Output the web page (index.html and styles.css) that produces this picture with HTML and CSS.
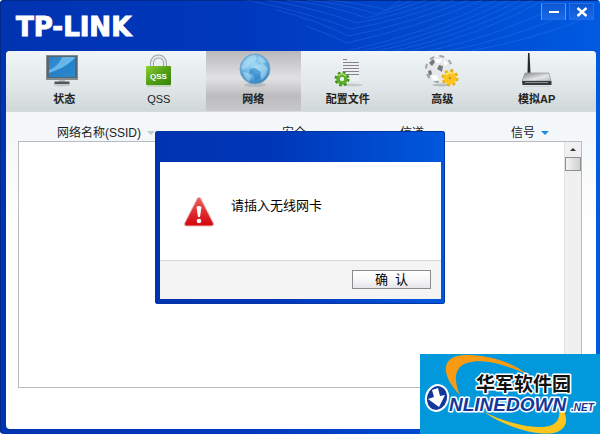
FILE: index.html
```html
<!DOCTYPE html>
<html lang="zh-CN">
<head>
    <meta charset="UTF-8">
    <meta name="viewport" content="width=device-width, initial-scale=1.0">
    <title>TP-LINK</title>
    <link rel="stylesheet" href="styles.css">
</head>
<body>
    <div class="window">
        <header class="titlebar">
            <svg class="waves" viewBox="0 0 400 51" preserveAspectRatio="xMaxYMin slice" aria-hidden="true">
                <g fill="none" stroke="#5b9cff" stroke-opacity=".3" stroke-width=".7">
                    <path d="M130 0Q165 3 190 10M110 0Q150 4 180 14M90 0Q140 6 170 18M70 0Q120 8 160 23M50 0Q110 12 155 29M80 10Q120 20 152 36M110 26Q130 33 150 43"/>
                    <path d="M150 51Q230 34 300 0M166 51Q245 34 312 0M182 51Q258 34 324 0M198 51Q272 34 336 0M214 51Q287 34 348 0M232 51Q302 36 366 4M252 51Q318 38 380 10M274 51Q335 40 390 18"/>
                    <path d="M150 43Q220 28 286 0M152 36Q212 24 272 0M155 29Q205 20 258 0M160 23Q200 16 244 0M170 18Q195 12 230 0M180 14Q195 9 216 0M190 10Q198 6 204 0"/>
                </g>
            </svg>
            <h1 class="logo">TP-LINK</h1>
            <div class="window-buttons">
                <button type="button" aria-label="最小化">
                    <svg width="12" height="12" viewBox="0 0 12 12"><path d="M1 6h10" stroke="#fff" stroke-width="2"/></svg>
                </button>
                <button type="button" class="close" aria-label="关闭">
                    <svg width="12" height="12" viewBox="0 0 12 12"><path d="M1.500 2l9 8M10.500 2l-9 8" stroke="#fff" stroke-width="2.400"/></svg>
                </button>
            </div>
        </header>

        <main class="panel">
            <nav class="tabs">
                <a href="#status">
                    <svg width="36" height="36" viewBox="0 0 36 36" aria-hidden="true">
                        <defs>
                            <linearGradient id="screen" x1="0" y1="0" x2="1" y2="1"><stop offset="0" stop-color="#2b7fc6"/><stop offset="1" stop-color="#3fa5e6"/></linearGradient>
                        </defs>
                        <ellipse cx="16" cy="34" rx="9" ry="1.500" fill="#c3c9cb"/>
                        <path d="M13 28h6v3h-6z" fill="#b9bfc2"/>
                        <path d="M8.500 30.500h15v2.500h-15z" fill="#50585c"/>
                        <path d="M0 4h32v25H0z" fill="#858d91"/>
                        <path d="M1 5h30v22H1z" fill="#566570"/>
                        <path d="M3 6h26v20H3z" fill="url(#screen)"/>
                        <path d="M3 22C12 19 21 15 29 7v19H3z" fill="#1c76be" opacity=".6"/>
                        <path d="M3 22C12 19 21 15 29 7V6H16C14 12 9 17 3 19z" fill="#8bd0f5" opacity=".6"/>
                    </svg>
                    <span>状态</span>
                </a>
                <a href="#qss" class="latin">
                    <svg width="36" height="36" viewBox="0 0 36 36" aria-hidden="true">
                        <defs>
                            <linearGradient id="lock" x1="0" y1="0" x2="1" y2="1"><stop offset="0" stop-color="#8ccf32"/><stop offset=".5" stop-color="#55a016"/><stop offset="1" stop-color="#35820d"/></linearGradient>
                        </defs>
                        <path d="M6 34h24v2H6z" fill="#c4d5c1"/>
                        <path d="M11 18V12a6.500 6.500 0 0 1 13 0v6" fill="none" stroke="#9ea4a8" stroke-width="4"/>
                        <path d="M11 18V12a6.500 6.500 0 0 1 13 0v6" fill="none" stroke="#e6e9eb" stroke-width="2"/>
                        <rect x="5" y="15" width="25" height="19" rx="1" fill="url(#lock)"/>
                        <text x="17.500" y="28" text-anchor="middle" class="lock-text">QSS</text>
                    </svg>
                    <span>QSS</span>
                </a>
                <a href="#network" class="active" aria-current="page">
                    <svg width="36" height="36" viewBox="0 0 36 36" aria-hidden="true">
                        <defs>
                            <radialGradient id="globe" cx=".45" cy=".35" r=".65"><stop offset="0" stop-color="#a2daf6"/><stop offset=".6" stop-color="#68b4e4"/><stop offset="1" stop-color="#337fbd"/></radialGradient>
                        </defs>
                        <ellipse cx="20" cy="34" rx="11" ry="2" fill="#b6bbc1"/>
                        <circle cx="20" cy="18" r="15" fill="url(#globe)" stroke="#7aa6c8"/>
                        <path d="M9 11q5-7 11-7l2 3-3 3-3 1-3 5-5 3-2-3zM23 5q5 1 8 6l-4 2-3-3zM21 14l7-1 5 4-2 7-4 5-2-5-5-2-2-4zM8 21l5 1 3 4-2 5q-5-4-6-10z" fill="#d1effb" opacity=".4"/>
                        <path d="M15 18l5-1 6 4-1 6-5 3-2-6-4-2z" fill="#287fc8" opacity=".6"/>
                    </svg>
                    <span>网络</span>
                </a>
                <a href="#profile">
                    <svg width="36" height="36" viewBox="0 0 36 36" aria-hidden="true">
                        <ellipse cx="22" cy="34" rx="11" ry="1.500" fill="#c4c8c8"/>
                        <path d="M12 7h17v23H12z" fill="#edf0f0"/>
                        <path d="M13 8.500h4M13 11.500h16M13 14.500h16M13 17.500h16M13 20.500h16M13 23.500h16" stroke="#8a8492" stroke-width="1"/>
                        <circle cx="12" cy="28" r="6" fill="none" stroke="#3b8e16" stroke-width="3" stroke-dasharray="2.500 2.210"/>
                        <circle cx="12" cy="28" r="4" fill="none" stroke="#58ad28" stroke-width="3.500"/>
                        <path d="M8 25q4-4 8 0" fill="none" stroke="#a7dc61" stroke-width="1.500"/>
                    </svg>
                    <span>配置文件</span>
                </a>
                <a href="#advanced">
                    <svg width="36" height="36" viewBox="0 0 36 36" aria-hidden="true">
                        <ellipse cx="17" cy="34" rx="9" ry="1.500" fill="#b9bdbe"/>
                        <circle cx="15" cy="18" r="12" fill="none" stroke="#a3a5a8" stroke-width="4" stroke-dasharray="4.500 4.920"/>
                        <circle cx="15" cy="18" r="8" fill="none" stroke="#e6e8e9" stroke-width="8"/>
                        <path d="M5 12l4-4 2 3-3 4zM15 14l4 1-1 6-5-3zM4 20l3-1 1 4-3 2z" fill="#77797c"/>
                        <path d="M11 8l7 0-2 4h-4zM7 25l5-1 3 5-5 1zM19 9l5 3-3 3z" fill="#fff"/>
                        <circle cx="26" cy="27" r="7" fill="none" stroke="#e9ae14" stroke-width="3" stroke-dasharray="3 2.500"/>
                        <circle cx="26" cy="27" r="4" fill="none" stroke="#fac51c" stroke-width="5"/>
                        <path d="M22 24q3-4 7-1" fill="none" stroke="#ffe76b" stroke-width="1.500"/>
                        <circle cx="26" cy="27" r="1.500" fill="#d99406"/>
                    </svg>
                    <span>高级</span>
                </a>
                <a href="#ap">
                    <svg width="36" height="36" viewBox="0 0 36 36" aria-hidden="true">
                        <defs>
                            <linearGradient id="router" x1="0" y1="0" x2="1" y2="1"><stop offset="0" stop-color="#7f8385"/><stop offset=".6" stop-color="#e4e6e7"/><stop offset="1" stop-color="#b4b7b9"/></linearGradient>
                        </defs>
                        <path d="M4 35h27v1H4z" fill="#cbd0d1"/>
                        <path d="M9 2h1.500l1 20H8.500z" fill="#25292b"/>
                        <path d="M6 22h24l2 8H3z" fill="url(#router)" stroke="#9a9ea0" stroke-width=".8"/>
                        <path d="M3 30h29.500v4H3.500z" fill="#363a3d"/>
                        <path d="M6 31.500h23" stroke="#8b9093"/>
                    </svg>
                    <span>模拟AP</span>
                </a>
            </nav>

            <section class="networks">
                <div class="columns">
                    <span>网络名称(SSID) <i class="arrow"></i></span>
                    <span>安全</span>
                    <span>信道</span>
                    <span>信号 <i class="arrow sorted"></i></span>
                </div>
                <div class="list">
                    <div class="scrollbar">
                        <button type="button" class="scroll-up" aria-label="向上滚动"></button>
                        <div class="thumb"></div>
                    </div>
                </div>
            </section>
        </main>
    </div>

    <div class="overlay">
        <div class="dialog" role="alertdialog" aria-labelledby="message">
            <div class="dialog-body">
                <svg width="32" height="32" viewBox="0 0 32 32" aria-hidden="true">
                    <defs>
                        <linearGradient id="warning" x1="0" y1="0" x2="0" y2="1"><stop offset="0" stop-color="#e95a5a"/><stop offset=".5" stop-color="#dd3033"/><stop offset="1" stop-color="#d50b10"/></linearGradient>
                    </defs>
                    <path d="M16 3.500L28.500 28h-25z" fill="url(#warning)" stroke="#e9b9b4" stroke-width="5" stroke-linejoin="round"/>
                    <path d="M16 3.500L28.500 28h-25z" fill="url(#warning)" stroke="url(#warning)" stroke-width="3" stroke-linejoin="round"/>
                    <path d="M13.500 11q2.500-2 5 0l-1.500 10h-2z" fill="#fff"/>
                    <circle cx="16" cy="25" r="2.300" fill="#fff"/>
                </svg>
                <p id="message">请插入无线网卡</p>
            </div>
            <div class="dialog-footer">
                <button type="button">确&nbsp; 认</button>
            </div>
        </div>
    </div>

    <a class="badge" href="#onlinedown" aria-label="华军软件园">
        <svg width="180" height="80" viewBox="0 0 180 80">
            <path d="M40 41C21 22 20 2 44 1c25-1 52 9 64 20C87 11 63 4 47 9c-15 5-12 20-7 32z" fill="#f89b12"/>
            <path d="M64 58C86 69 119 77 132 71c10-5 9-17 2-29 14 16 17 30 3 36-19 6-55-7-73-20z" fill="#fcc51b"/>
            <text x="56" y="37" class="badge-name">华军软件园</text>
            <text x="29" y="57" class="badge-site">NLINEDOWN</text>
            <text x="151" y="57" class="badge-net">.NET</text>
            <ellipse cx="17" cy="44" rx="11" ry="13" transform="rotate(15 17 44)" fill="#14389a" stroke="#fff" stroke-width="2"/>
            <path d="M12 36l6-2 2 8 5-1-6 12-11-8 6-2z" fill="#fff"/>
        </svg>
    </a>
</body>
</html>
```
FILE: styles.css
```css
* {
    box-sizing: border-box;
}

body {
    margin: 0;
    font-family: "Liberation Sans", "Noto Sans CJK SC", sans-serif;
    font-size: 12px;
    color: #222;
    background-color: #fff;
}

button {
    padding: 0;
    font-family: inherit;
    cursor: pointer;
}

.window {
    display: flex;
    flex-direction: column;
    min-height: 100vh;
    padding: 0 4px 5px 6px;
    border-radius: 4px;
    background: linear-gradient(to right, #0033b0, #0038bd 40%, #005ae0);
    box-shadow: inset 1px 1px 0 #002a8c;
}

.titlebar {
    position: relative;
    display: flex;
    justify-content: space-between;
    height: 51px;
    padding: 0 0 0 10px;
}

.waves {
    position: absolute;
    top: 0;
    right: 0;
    width: 66%;
    height: 51px;
}

.logo {
    margin: 12px 0 0;
    font-family: "DejaVu Sans", sans-serif;
    font-size: 26px;
    line-height: 30px;
    font-weight: bold;
    color: #fff;
    -webkit-text-stroke: 1px #fff;
}

.window-buttons {
    position: relative;
    display: flex;
    gap: 3px;
    padding: 3px 2px 0 0;
}

.window-buttons button {
    display: flex;
    align-items: center;
    justify-content: center;
    width: 25px;
    height: 17px;
    border: 1px solid #5f9bf5;
    border-top-color: #2b6ee2;
    border-bottom: none;
    background: linear-gradient(#0c56d2, #1c6be8);
}

.window-buttons .close {
    border-color: #2670e8;
}

.panel {
    flex: 1;
    display: flex;
    flex-direction: column;
    border-radius: 4px;
    background: linear-gradient(#f3f7f9, #f3f7f9 80px, #fff 180px);
    overflow: hidden;
}

.tabs {
    display: flex;
    height: 61px;
    padding: 0 12px 0 11px;
    border-bottom: 1px solid #d5dcde;
    background: linear-gradient(#f0f5f7, #e1e7e9 60%, #d0d7d9);
}

.tabs a {
    flex: 1;
    display: flex;
    flex-direction: column;
    align-items: center;
    gap: 4px;
    font-size: 11px;
    line-height: 16px;
    font-weight: bold;
    color: #222;
    text-decoration: none;
}

.tabs .latin {
    font-weight: normal;
}

.tabs .active {
    background: linear-gradient(#b9b9bc, #e2e2e4 45%, #bcbcbf 75%, #c8c8ca);
}

.lock-text {
    font-size: 8px;
    font-weight: bold;
    fill: #fff;
}

.networks {
    flex: 1;
    display: flex;
    flex-direction: column;
    padding: 13px 14px 41px 12px;
}

.columns {
    display: grid;
    grid-template-columns: 225fr 118fr 111fr 71fr;
    padding-left: 39px;
    line-height: 16px;
}

.arrow {
    display: inline-block;
    margin-left: 3px;
    border: 4px solid transparent;
    border-top-color: #c5c9cb;
    border-bottom: none;
    vertical-align: 2px;
}

.sorted {
    border-top-color: #1d8fe0;
}

.list {
    flex: 1;
    display: flex;
    justify-content: flex-end;
    border: 1px solid #b9bcbd;
    background-color: #fff;
}

.scrollbar {
    width: 17px;
    border-left: 1px solid #e2e2e2;
    background-color: #f0f0f0;
}

.scroll-up {
    display: flex;
    align-items: center;
    justify-content: center;
    width: 100%;
    height: 15px;
    border: none;
    background: none;
}

.scroll-up::before {
    content: "";
    border: 3px solid transparent;
    border-top: none;
    border-bottom-color: #333;
}

.thumb {
    height: 14px;
    border: 1px solid #8f8f8f;
    background: linear-gradient(to right, #f4f4f4, #d0d0d0);
}

.overlay {
    position: fixed;
    inset: 0;
    display: flex;
    align-items: center;
    justify-content: center;
}

.dialog {
    width: 290px;
    padding: 30px 3px 4px 4px;
    border: 1px solid #0035a5;
    border-radius: 2px;
    background: linear-gradient(to right, #0033b0, #0036b8 40%, #0058dc);
}

.dialog-body {
    display: flex;
    gap: 16px;
    min-height: 98px;
    padding: 34px 23px 0;
    background-color: #fff;
}

.dialog-body p {
    margin: 0;
    font-size: 13px;
    line-height: 20px;
    color: #000;
}

.dialog-footer {
    display: flex;
    justify-content: flex-end;
    padding: 9px 10px 10px;
    border-top: 1px solid #d9d9d9;
    background-color: #f4f4f5;
}

.dialog-footer button {
    width: 79px;
    height: 19px;
    border: 1px solid #8c8c90;
    background: linear-gradient(#fff, #f7f7f8 50%, #e6e6ea);
    font-size: 13px;
    line-height: 17px;
    color: #000;
}

.badge {
    position: fixed;
    right: 0;
    bottom: 0;
    background-color: #0299dc;
}

.badge svg {
    display: block;
}

.badge text {
    stroke: #fff;
    stroke-width: 3px;
    stroke-linejoin: round;
    paint-order: stroke;
    font-weight: bold;
}

.badge-name {
    font-size: 19px;
    fill: #111;
}

.badge-site {
    font-size: 19px;
    font-style: italic;
    fill: #14389a;
}

.badge-net {
    font-size: 10px;
    font-style: italic;
    fill: #14389a;
}
```
